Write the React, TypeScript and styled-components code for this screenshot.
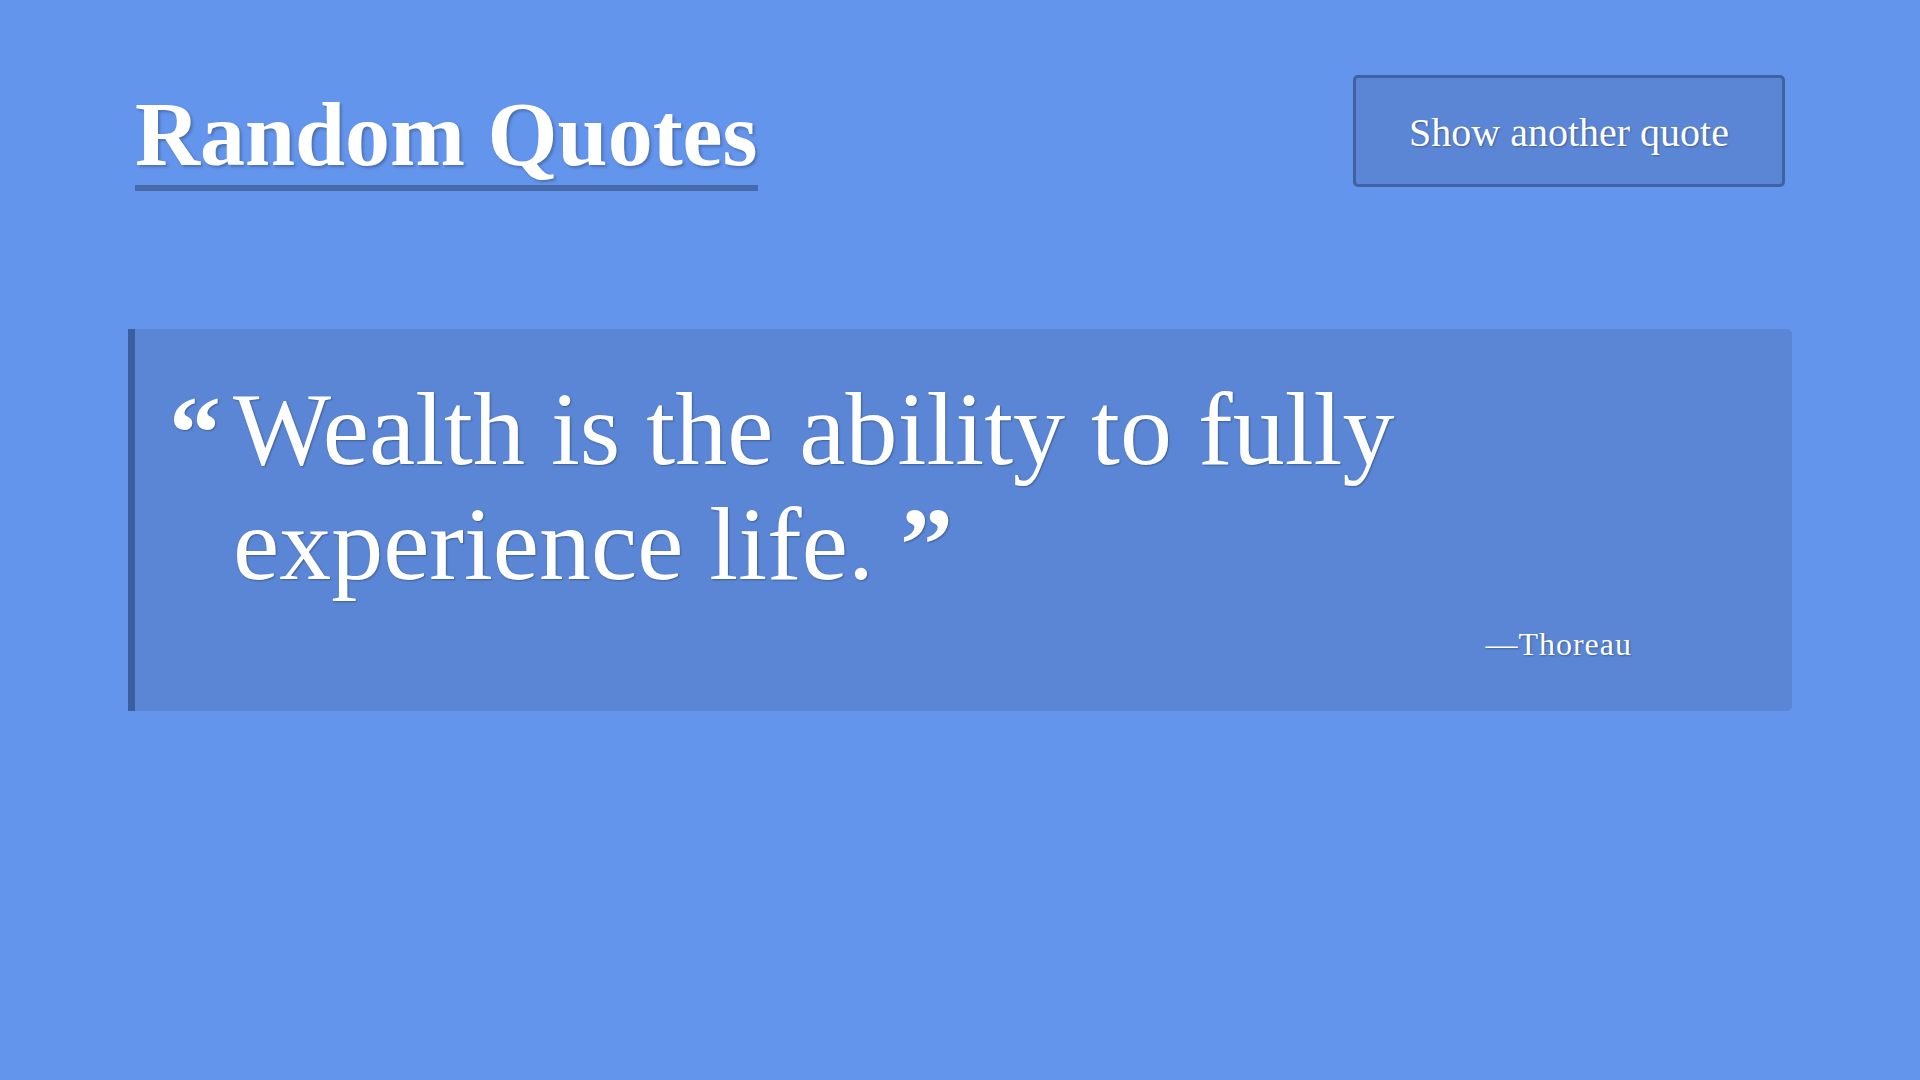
import React from "react";
import styled, { createGlobalStyle } from "styled-components";

const GlobalStyle = createGlobalStyle`
  html, body {
    margin: 0;
    padding: 0;
    background: #6495ed;
  }
  body {
    font-family: "Liberation Serif", "Times New Roman", serif;
    color: #ffffff;
    min-height: 1080px;
  }
`;

const Page = styled.main`
  box-sizing: border-box;
  width: 1920px;
  min-height: 1080px;
  padding: 0 128px;
  background: #6495ed;
`;

const Header = styled.header`
  display: flex;
  justify-content: space-between;
  align-items: flex-start;
  padding: 75px 7px 0 7px;
`;

const Title = styled.h1`
  display: inline-block;
  margin: 12px 0 0 0;
  padding: 0 0 2px 0;
  font-family: "Liberation Serif", "Times New Roman", serif;
  font-weight: 700;
  font-size: 90px;
  line-height: 96px;
  color: #ffffff;
  border-bottom: 6px solid #476aab;
  text-shadow: 2px 2px 3px rgba(0, 0, 0, 0.25);
`;

const NextButton = styled.button`
  box-sizing: border-box;
  width: 432px;
  height: 112px;
  padding: 32px 0 28px;
  font-family: "Liberation Serif", "Times New Roman", serif;
  font-size: 40px;
  line-height: 46px;
  color: #ffffff;
  background: #5b86d6;
  border: 3px solid #3f62a3;
  border-radius: 5px;
  text-shadow: 1px 1px 2px rgba(0, 0, 0, 0.3);
  cursor: pointer;
`;

const QuoteBox = styled.blockquote`
  box-sizing: border-box;
  margin: 138px 0 0 0;
  padding: 42px 160px 47px 34px;
  background: #5a86d5;
  border-left: 7px solid #3d5e9c;
  border-radius: 0 5px 5px 0;
`;

const QuoteRow = styled.div`
  display: flex;
  align-items: flex-start;
`;

const OpenMark = styled.span`
  flex: 0 0 64px;
  font-family: "Liberation Serif", "Times New Roman", serif;
  font-weight: 700;
  font-size: 104px;
  line-height: 104px;
  margin-top: 10px;
  text-shadow: 1px 1px 2px rgba(0, 0, 0, 0.3);
`;

const QuoteText = styled.p`
  margin: 0;
  font-family: "Liberation Serif", "Times New Roman", serif;
  font-size: 104px;
  line-height: 115px;
  text-shadow: 1px 1px 2px rgba(0, 0, 0, 0.3);
`;

const CloseMark = styled.span`
  font-weight: 700;
  font-size: 106px;
  line-height: 0;
  vertical-align: -2px;
`;

const Author = styled.footer`
  margin-top: 23px;
  text-align: right;
  font-family: "Liberation Serif", "Times New Roman", serif;
  font-size: 32px;
  line-height: 40px;
  letter-spacing: 1px;
  text-shadow: 1px 1px 2px rgba(0, 0, 0, 0.3);
`;

export default function App() {
  return (
    <>
      <GlobalStyle />
      <Page>
        <Header>
          <Title>Random Quotes</Title>
          <NextButton type="button">Show another quote</NextButton>
        </Header>
        <QuoteBox>
          <QuoteRow>
            <OpenMark>“</OpenMark>
            <QuoteText>
              Wealth is the ability to fully experience life. <CloseMark>”</CloseMark>
            </QuoteText>
          </QuoteRow>
          <Author>—Thoreau</Author>
        </QuoteBox>
      </Page>
    </>
  );
}
